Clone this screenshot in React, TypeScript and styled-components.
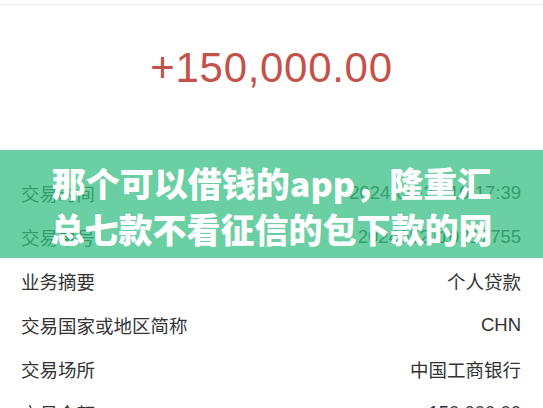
import React from "react";
import styled, { createGlobalStyle } from "styled-components";

const Global = createGlobalStyle`
  html, body { margin: 0; padding: 0; background: #ffffff; }
  body { font-family: "Liberation Sans", "Noto Sans CJK SC", sans-serif; overflow: hidden; }
  #root { width: 543px; height: 408px; }
`;

const Page = styled.div`
  position: relative;
  width: 543px;
  height: 408px;
  overflow: hidden;
  background: #ffffff;
`;

const TopBar = styled.div`
  height: 4px;
  border-bottom: 1px solid #ebebeb;
`;

const AmountSection = styled.section`
  height: 166px;
  box-sizing: border-box;
  padding-top: 39px;
  display: flex;
  justify-content: center;
`;

const Amount = styled.div`
  font-family: "Liberation Sans", sans-serif;
  font-size: 42px;
  line-height: 48px;
  letter-spacing: 0.7px;
  color: #c3524a;
`;

const List = styled.div`
  display: flex;
  flex-direction: column;
  padding: 0 22px 0 21px;
`;

const Row = styled.div`
  height: 44px;
  display: flex;
  align-items: center;
  justify-content: space-between;
  font-size: 18.5px;
  color: #333333;
`;

const Label = styled.span`
  font-family: "Liberation Sans", "Noto Sans CJK SC", sans-serif;
`;

const Value = styled.span`
  font-family: "Liberation Sans", "Noto Sans CJK SC", sans-serif;
`;

const Banner = styled.div`
  position: absolute;
  left: 0;
  right: 0;
  top: 150px;
  height: 108px;
  box-sizing: border-box;
  padding-top: 10px;
  background: rgba(56, 191, 131, 0.75);
  display: flex;
  flex-direction: column;
  align-items: center;
`;

const BannerLine = styled.div`
  font-family: "Noto Sans CJK SC", sans-serif;
  font-weight: 900;
  font-size: 34px;
  line-height: 46px;
  color: #ffffff;
  white-space: nowrap;
`;

const rows: [string, string][] = [
  ["交易时间", "2024-05-21 10:17:39"],
  ["交易单号", "2024052110217755"],
  ["业务摘要", "个人贷款"],
  ["交易国家或地区简称", "CHN"],
  ["交易场所", "中国工商银行"],
  ["交易金额", "150,000.00"],
];

export default function App() {
  return (
    <Page>
      <Global />
      <TopBar />
      <AmountSection>
        <Amount>+150,000.00</Amount>
      </AmountSection>
      <List>
        {rows.map(([l, v]) => (
          <Row key={l}>
            <Label>{l}</Label>
            <Value>{v}</Value>
          </Row>
        ))}
      </List>
      <Banner>
        <BannerLine>那个可以借钱的app，隆重汇</BannerLine>
        <BannerLine>总七款不看征信的包下款的网</BannerLine>
      </Banner>
    </Page>
  );
}
